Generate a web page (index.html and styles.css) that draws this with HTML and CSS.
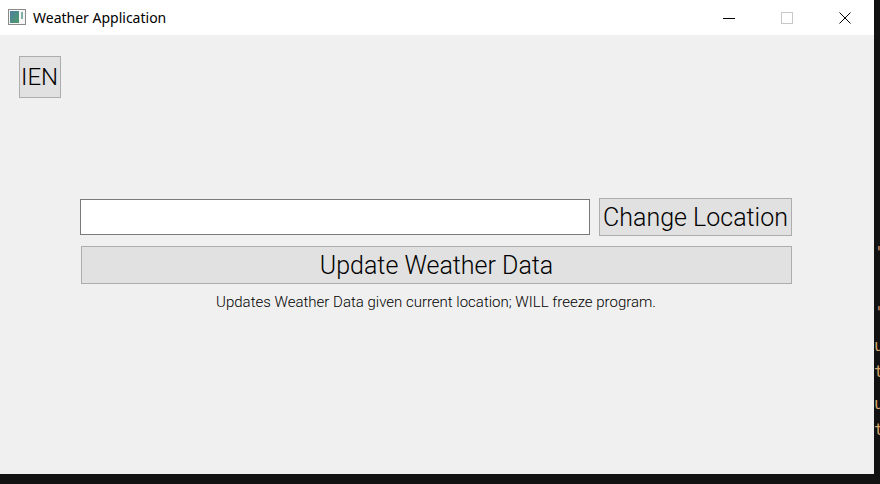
FILE: index.html
```html
<!DOCTYPE html>
<html>
<head>
<meta charset="utf-8">
<title>Weather Application</title>
<link rel="stylesheet" href="styles.css">
</head>
<body>
<div class="screen">
  <div class="window">
    <div class="titlebar">
      <svg class="app-icon" width="18" height="16" viewBox="0 0 18 16">
        <defs>
          <linearGradient id="g" x1="0" y1="0" x2="1" y2="1">
            <stop offset="0" stop-color="#4f7fa0"/>
            <stop offset="1" stop-color="#4f9a6a"/>
          </linearGradient>
        </defs>
        <rect x="0.5" y="0.5" width="17" height="15" fill="#f6f6f6" stroke="#8a8a8a"/>
        <rect x="2" y="2" width="9" height="12" fill="url(#g)"/>
        <rect x="13" y="3" width="2" height="7" fill="#7fb0a8"/>
      </svg>
      <span class="title">Weather Application</span>
      <div class="caption-btns">
        <span class="cap-btn"><svg width="12" height="12" viewBox="0 0 12 12"><line x1="0" y1="6.5" x2="12" y2="6.5" stroke="#000" stroke-width="1"/></svg></span>
        <span class="cap-btn"><svg width="12" height="12" viewBox="0 0 12 12"><rect x="0.5" y="0.5" width="11" height="11" fill="none" stroke="#c8c8c8"/></svg></span>
        <span class="cap-btn"><svg width="12" height="12" viewBox="0 0 12 12"><path d="M0.5 0.5 L11.5 11.5 M11.5 0.5 L0.5 11.5" stroke="#000" stroke-width="1"/></svg></span>
      </div>
    </div>
    <div class="client">
      <button class="lang-btn">IEN</button>
      <div class="panel">
        <div class="row">
          <input class="loc-input" type="text">
          <button class="btn change-btn">Change Location</button>
        </div>
        <button class="btn update-btn">Update Weather Data</button>
        <p class="caption">Updates Weather Data given current location; WILL freeze program.</p>
      </div>
    </div>
  </div>
  <div class="side">
    <span class="code c1">''</span>
    <span class="code c2">''</span>
    <span class="code c3">u</span>
    <span class="code c4">t</span>
    <span class="code c5">u</span>
    <span class="code c6">t</span>
  </div>
</div>
</body>
</html>
```
FILE: styles.css
```css
* { box-sizing: border-box; }
html, body { margin: 0; padding: 0; }
body {
  background: #121212;
  width: 880px;
  height: 484px;
  overflow: hidden;
  font-family: Roboto, "Noto Sans", sans-serif;
}
.screen {
  display: flex;
  width: 880px;
  height: 484px;
  position: relative;
}
.window {
  width: 874px;
  height: 474px;
  background: #f0f0f0;
  display: flex;
  flex-direction: column;
}
.titlebar {
  height: 35px;
  background: #ffffff;
  display: flex;
  align-items: center;
  padding-left: 8px;
}
.app-icon { margin-right: 7px; margin-top: -1px; }
.title {
  font-family: "Noto Sans", "Open Sans", sans-serif;
  font-size: 14px;
  color: #000;
  margin-top: -1px;
}
.caption-btns {
  margin-left: auto;
  display: flex;
  height: 100%;
}
.cap-btn {
  width: 58px;
  height: 35px;
  display: flex;
  align-items: center;
  justify-content: center;
}
.client {
  flex: 1;
  padding: 21px 0 0 19px;
}
.btn, .lang-btn {
  background: #e1e1e1;
  border: 1px solid #adadad;
  font-family: Roboto, sans-serif;
  font-weight: 300;
  color: #000;
  padding: 0;
  margin: 0;
}
.lang-btn {
  display: block;
  width: 42px;
  height: 42px;
  font-size: 24px;
  text-align: left;
  padding-left: 1px;
  line-height: 38px;
}
.panel {
  margin: 100px 0 0 61px;
  width: 712px;
  display: flex;
  flex-direction: column;
}
.row {
  display: flex;
  align-items: center;
  gap: 9px;
}
.loc-input {
  width: 510px;
  height: 36px;
  border: 1px solid #7a7a7a;
  background: #fff;
  margin: 0;
  padding: 0 4px;
  outline: none;
}
.change-btn {
  width: 193px;
  height: 38px;
  font-size: 25px;
  line-height: 34px;
  padding-top: 2px;
}
.update-btn {
  margin: 10px 0 0 1px;
  width: 711px;
  height: 38px;
  font-size: 25px;
  line-height: 34px;
  padding-top: 2px;
}
.caption {
  margin: 9px 0 0;
  text-align: center;
  font-size: 15px;
  line-height: 18px;
  color: #000;
  font-weight: 300;
}
.side {
  width: 6px;
  height: 474px;
  position: relative;
  overflow: hidden;
}
.code {
  position: absolute;
  left: 0;
  color: #ce9178;
  font-family: "DejaVu Sans Mono", monospace;
  font-size: 16px;
  line-height: 16px;
}
.c1 { top: 245px; }
.c2 { top: 305px; }
.c3 { top: 338px; color: #d7a66a; }
.c4 { top: 364px; color: #d7a66a; }
.c5 { top: 396px; color: #d7a66a; }
.c6 { top: 422px; color: #d7a66a; }
```
